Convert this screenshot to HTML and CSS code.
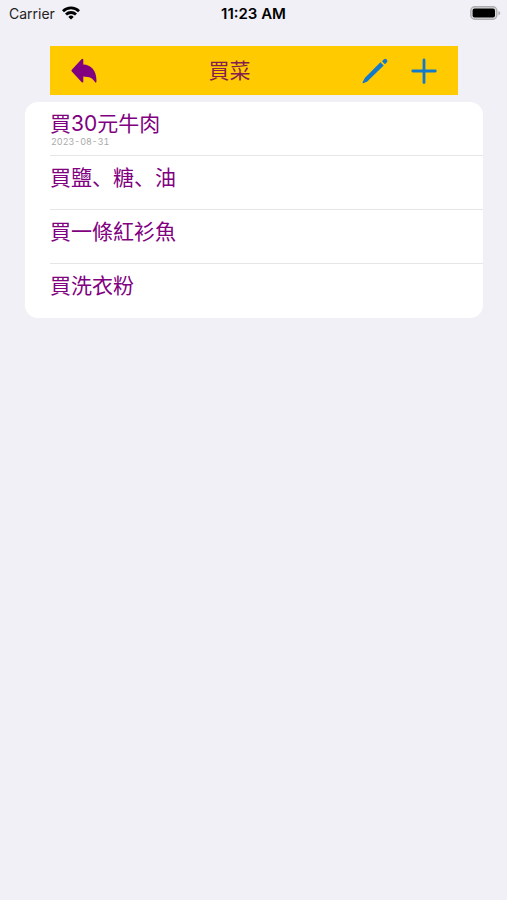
FILE: index.html
```
<!DOCTYPE html>
<html lang="zh-Hans">
<head>
    <meta charset="UTF-8">
    <meta name="viewport" content="width=device-width, initial-scale=1.0">
    <title>買菜</title>
    <link rel="stylesheet" href="styles.css">
</head>
<body>
    <div class="status-bar">
        <div class="carrier">
            <span>Carrier</span>
            <svg width="18" height="14" viewBox="0 0 18 14" fill="none" stroke="#000" stroke-width="2.8" aria-hidden="true">
                <path d="M1 5.2a11.4 11.4 0 0 1 16 0"/>
                <path d="M4 8.5a7.2 7.2 0 0 1 10 0"/>
                <path d="M9 13.6 6.3 10.9a3.9 3.9 0 0 1 5.4 0z" fill="#000" stroke="none"/>
            </svg>
        </div>
        <div class="time">11:23 AM</div>
        <div class="battery">
            <svg width="31" height="14" viewBox="0 0 31 14" aria-hidden="true">
                <rect x="0.8" y="0.8" width="26" height="12.4" rx="4" fill="#dcdcdf" stroke="#aeaeb0" stroke-width="1.4"/>
                <rect x="2.6" y="2.6" width="22.4" height="8.8" rx="2" fill="#000"/>
                <path d="M28.4 4.9c2.4.8 2.4 3.6 0 4.4z" fill="#aeaeb0"/>
            </svg>
        </div>
    </div>

    <header class="toolbar">
        <button class="icon-button" type="button" aria-label="返回">
            <svg width="26" height="26" viewBox="0 0 26 26" fill="#800080" aria-hidden="true">
                <path d="M.8 11.8 10.5 1.2Q12.3-.2 12.3 2v4.6C20 7 25.6 12 25.5 23.3q-.2 2.2-1.5.8C21.5 20.2 18.5 18.8 12.3 18.6v4.6q0 2.2-1.8.8L.8 13.4q-.7-.8 0-1.6z"/>
            </svg>
        </button>
        <h1 class="title">買菜</h1>
        <div class="actions">
            <button class="icon-button" type="button" aria-label="編輯">
                <svg width="26" height="26" viewBox="0 0 26 26" fill="#1279cd" aria-hidden="true">
                    <path d="M18.4 4.3 21.7 7.6 5.5 23.2 1.5 25.2Q.2 25.3.7 24L2.8 19.9z"/>
                    <path d="M20 3.2 21.7 1.5q1.5-1.3 3 0 1.4 1.5 0 3L22.9 6.2z"/>
                </svg>
            </button>
            <button class="icon-button" type="button" aria-label="新增">
                <svg width="26" height="26" viewBox="0 0 26 26" fill="none" stroke="#1279cd" stroke-width="2.8" stroke-linecap="round" aria-hidden="true">
                    <path d="M13 2v22.5M1.800 13h22.500"/>
                </svg>
            </button>
        </div>
    </header>

    <ul class="list">
        <li class="item">
            <div class="name">買30元牛肉</div>
            <div class="date">2023-08-31</div>
        </li>
        <li class="item">
            <div class="name">買鹽、糖、油</div>
        </li>
        <li class="item">
            <div class="name">買一條紅衫魚</div>
        </li>
        <li class="item">
            <div class="name">買洗衣粉</div>
        </li>
    </ul>
</body>
</html>
```

FILE: styles.css
```
* {
    box-sizing: border-box;
}
body {
    margin: 0;
    background-color: #f1f0f6;
    font-family: Inter, "Noto Sans CJK SC", sans-serif;
}
.status-bar {
    display: grid;
    grid-template-columns: 1fr auto 1fr;
    align-items: center;
    height: 26px;
    padding: 0 6px;
    font-size: 14px;
    color: #222;
}
.carrier {
    display: flex;
    align-items: center;
    gap: 7px;
    padding-left: 3px;
}
.time {
    font-weight: 600;
    font-size: 15px;
    color: #000;
}
.battery {
    display: flex;
    justify-content: flex-end;
}
.toolbar {
    display: flex;
    justify-content: space-between;
    align-items: center;
    height: 49px;
    margin: 20px 49px 0 50px;
    padding: 0 21px;
    background-color: #ffcb00;
}
.title {
    margin: 0;
    font-size: 21px;
    font-weight: 400;
    line-height: 30px;
    color: #851d50;
}
.icon-button {
    display: block;
    width: 26px;
    height: 26px;
    padding: 0;
    border: none;
    background: none;
    cursor: pointer;
}
.icon-button svg {
    display: block;
}
.actions {
    display: flex;
    justify-content: flex-end;
    gap: 23px;
}
.list {
    margin: 7px 24px 0 25px;
    padding: 0 0 0 25px;
    list-style: none;
    background-color: #fff;
    border-radius: 13px;
}
.item {
    height: 54px;
    padding-top: 8px;
    border-bottom: 1px solid #e6e6e8;
}
.item:last-child {
    border-bottom: none;
}
.name {
    font-size: 21px;
    line-height: 28px;
    color: #800080;
}
.date {
    padding-left: 1px;
    font-size: 9px;
    font-variant-numeric: tabular-nums;
    line-height: 8px;
    color: #aaa;
}
```
